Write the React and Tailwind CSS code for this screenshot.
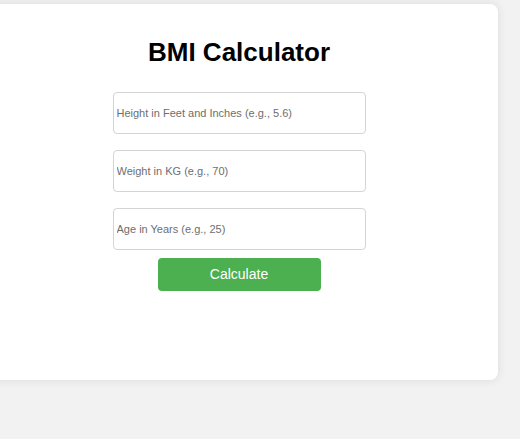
export default function App() {
  return (
    <div className="min-h-[439px] w-[520px] overflow-hidden bg-[#f2f2f2] pt-[4px]" style={{ fontFamily: '"Liberation Sans", Arial, sans-serif' }}>
      <div className="ml-[-20px] flex h-[376px] w-[518px] flex-col items-center rounded-[8px] bg-white pt-[33px] shadow-[0_0_10px_rgba(0,0,0,0.1)]">
        <h1 className="text-[26px] font-bold leading-[30px] text-black">BMI Calculator</h1>
        <div className="mt-[25px] flex flex-col items-center">
          <input
            type="text"
            placeholder="Height in Feet and Inches (e.g., 5.6)"
            className="box-border h-[42px] w-[253px] rounded-[4px] border border-[#d4d4d4] px-[3px] text-[11px] text-black placeholder:text-[#6e6e6e] outline-none"
          />
          <input
            type="text"
            placeholder="Weight in KG (e.g., 70)"
            className="mt-[16px] box-border h-[42px] w-[253px] rounded-[4px] border border-[#d4d4d4] px-[3px] text-[11px] text-black placeholder:text-[#6e6e6e] outline-none"
          />
          <input
            type="text"
            placeholder="Age in Years (e.g., 25)"
            className="mt-[16px] box-border h-[42px] w-[253px] rounded-[4px] border border-[#d4d4d4] px-[3px] text-[11px] text-black placeholder:text-[#6e6e6e] outline-none"
          />
          <button className="mt-[8px] h-[33px] w-[163px] rounded-[4px] bg-[#4caf50] text-[14px] text-white">
            Calculate
          </button>
        </div>
      </div>
    </div>
  );
}
